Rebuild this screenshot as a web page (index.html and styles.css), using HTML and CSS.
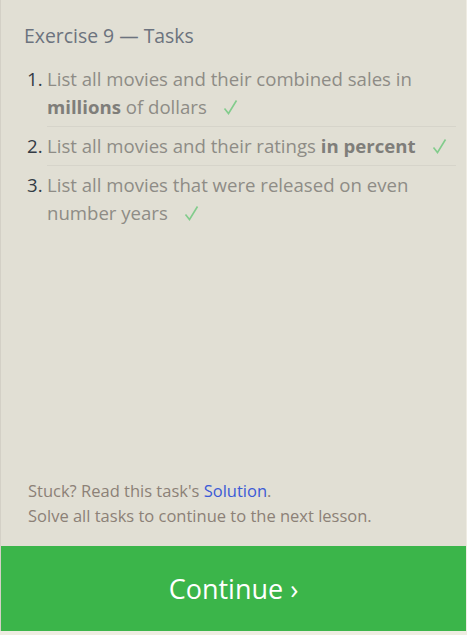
FILE: index.html
```html
<!DOCTYPE html>
<html>
<head>
<meta charset="utf-8">
<link rel="stylesheet" href="styles.css">
</head>
<body>
<div class="panel">
  <div class="content">
    <h2 class="title">Exercise 9 — Tasks</h2>
    <ol class="tasks">
      <li class="task"><span class="num">1.</span><span class="text">List all movies and their combined sales in <b>millions</b> of dollars<svg class="check" width="15" height="16" viewBox="0 0 15 16"><path d="M1.5 9.5 L5.5 14.5 L13.5 1.5" fill="none" stroke="#82cc8c" stroke-width="1.6"/></svg></span></li>
      <li class="task"><span class="num">2.</span><span class="text">List all movies and their ratings <b>in percent</b><svg class="check" width="15" height="16" viewBox="0 0 15 16"><path d="M1.5 9.5 L5.5 14.5 L13.5 1.5" fill="none" stroke="#82cc8c" stroke-width="1.6"/></svg></span></li>
      <li class="task"><span class="num">3.</span><span class="text">List all movies that were released on even number years<svg class="check" width="15" height="16" viewBox="0 0 15 16"><path d="M1.5 9.5 L5.5 14.5 L13.5 1.5" fill="none" stroke="#82cc8c" stroke-width="1.6"/></svg></span></li>
    </ol>
  </div>
  <div class="footer">
    <p class="hint">Stuck? Read this task's <a class="link" href="#">Solution</a>.</p>
    <p class="hint">Solve all tasks to continue to the next lesson.</p>
  </div>
  <button class="continue">Continue ›</button>
</div>
</body>
</html>
```

FILE: styles.css
```css
html, body {
  margin: 0;
  padding: 0;
  background: #efece3;
}
body {
  font-family: "Open Sans", "Noto Sans", sans-serif;
  width: 467px;
  height: 635px;
  overflow: hidden;
}
.panel {
  width: 465px;
  height: 631px;
  background: #e1dfd4;
  border-left: 1px solid #d3d0c6;
  display: flex;
  flex-direction: column;
}
.content {
  flex: 1;
  padding: 22px 10px 0 23px;
}
.title {
  margin: 0;
  font-size: 19.4px;
  font-weight: 400;
  color: #6c737e;
  line-height: 28px;
}
.tasks {
  list-style: none;
  margin: 15px 0 0 0;
  padding: 0;
}
.task {
  display: flex;
  font-size: 18.6px;
  line-height: 28px;
  color: #8e8c86;
}
.num {
  width: 23px;
  flex: none;
  padding-left: 3px;
  box-sizing: border-box;
  color: #333b45;
}
.text {
  flex: 1;
  padding-bottom: 5px;
  border-bottom: 1px solid #d6d4ca;
  margin-bottom: 5px;
}
.task:last-child .text {
  border-bottom: none;
}
.text b {
  color: #7f7e7a;
  font-weight: 700;
}
.check {
  margin-left: 16px;
  vertical-align: -1px;
}
.footer {
  padding: 0 20px 18px 27px;
}
.hint {
  margin: 0;
  font-size: 16.5px;
  line-height: 25px;
  color: #8c8177;
}
.link {
  color: #3c5ad6;
  text-decoration: none;
}
.continue {
  height: 85px;
  border: none;
  background: #3bb54a;
  color: #ffffff;
  font-family: inherit;
  font-size: 27px;
  padding: 0;
  width: 100%;
}
```
